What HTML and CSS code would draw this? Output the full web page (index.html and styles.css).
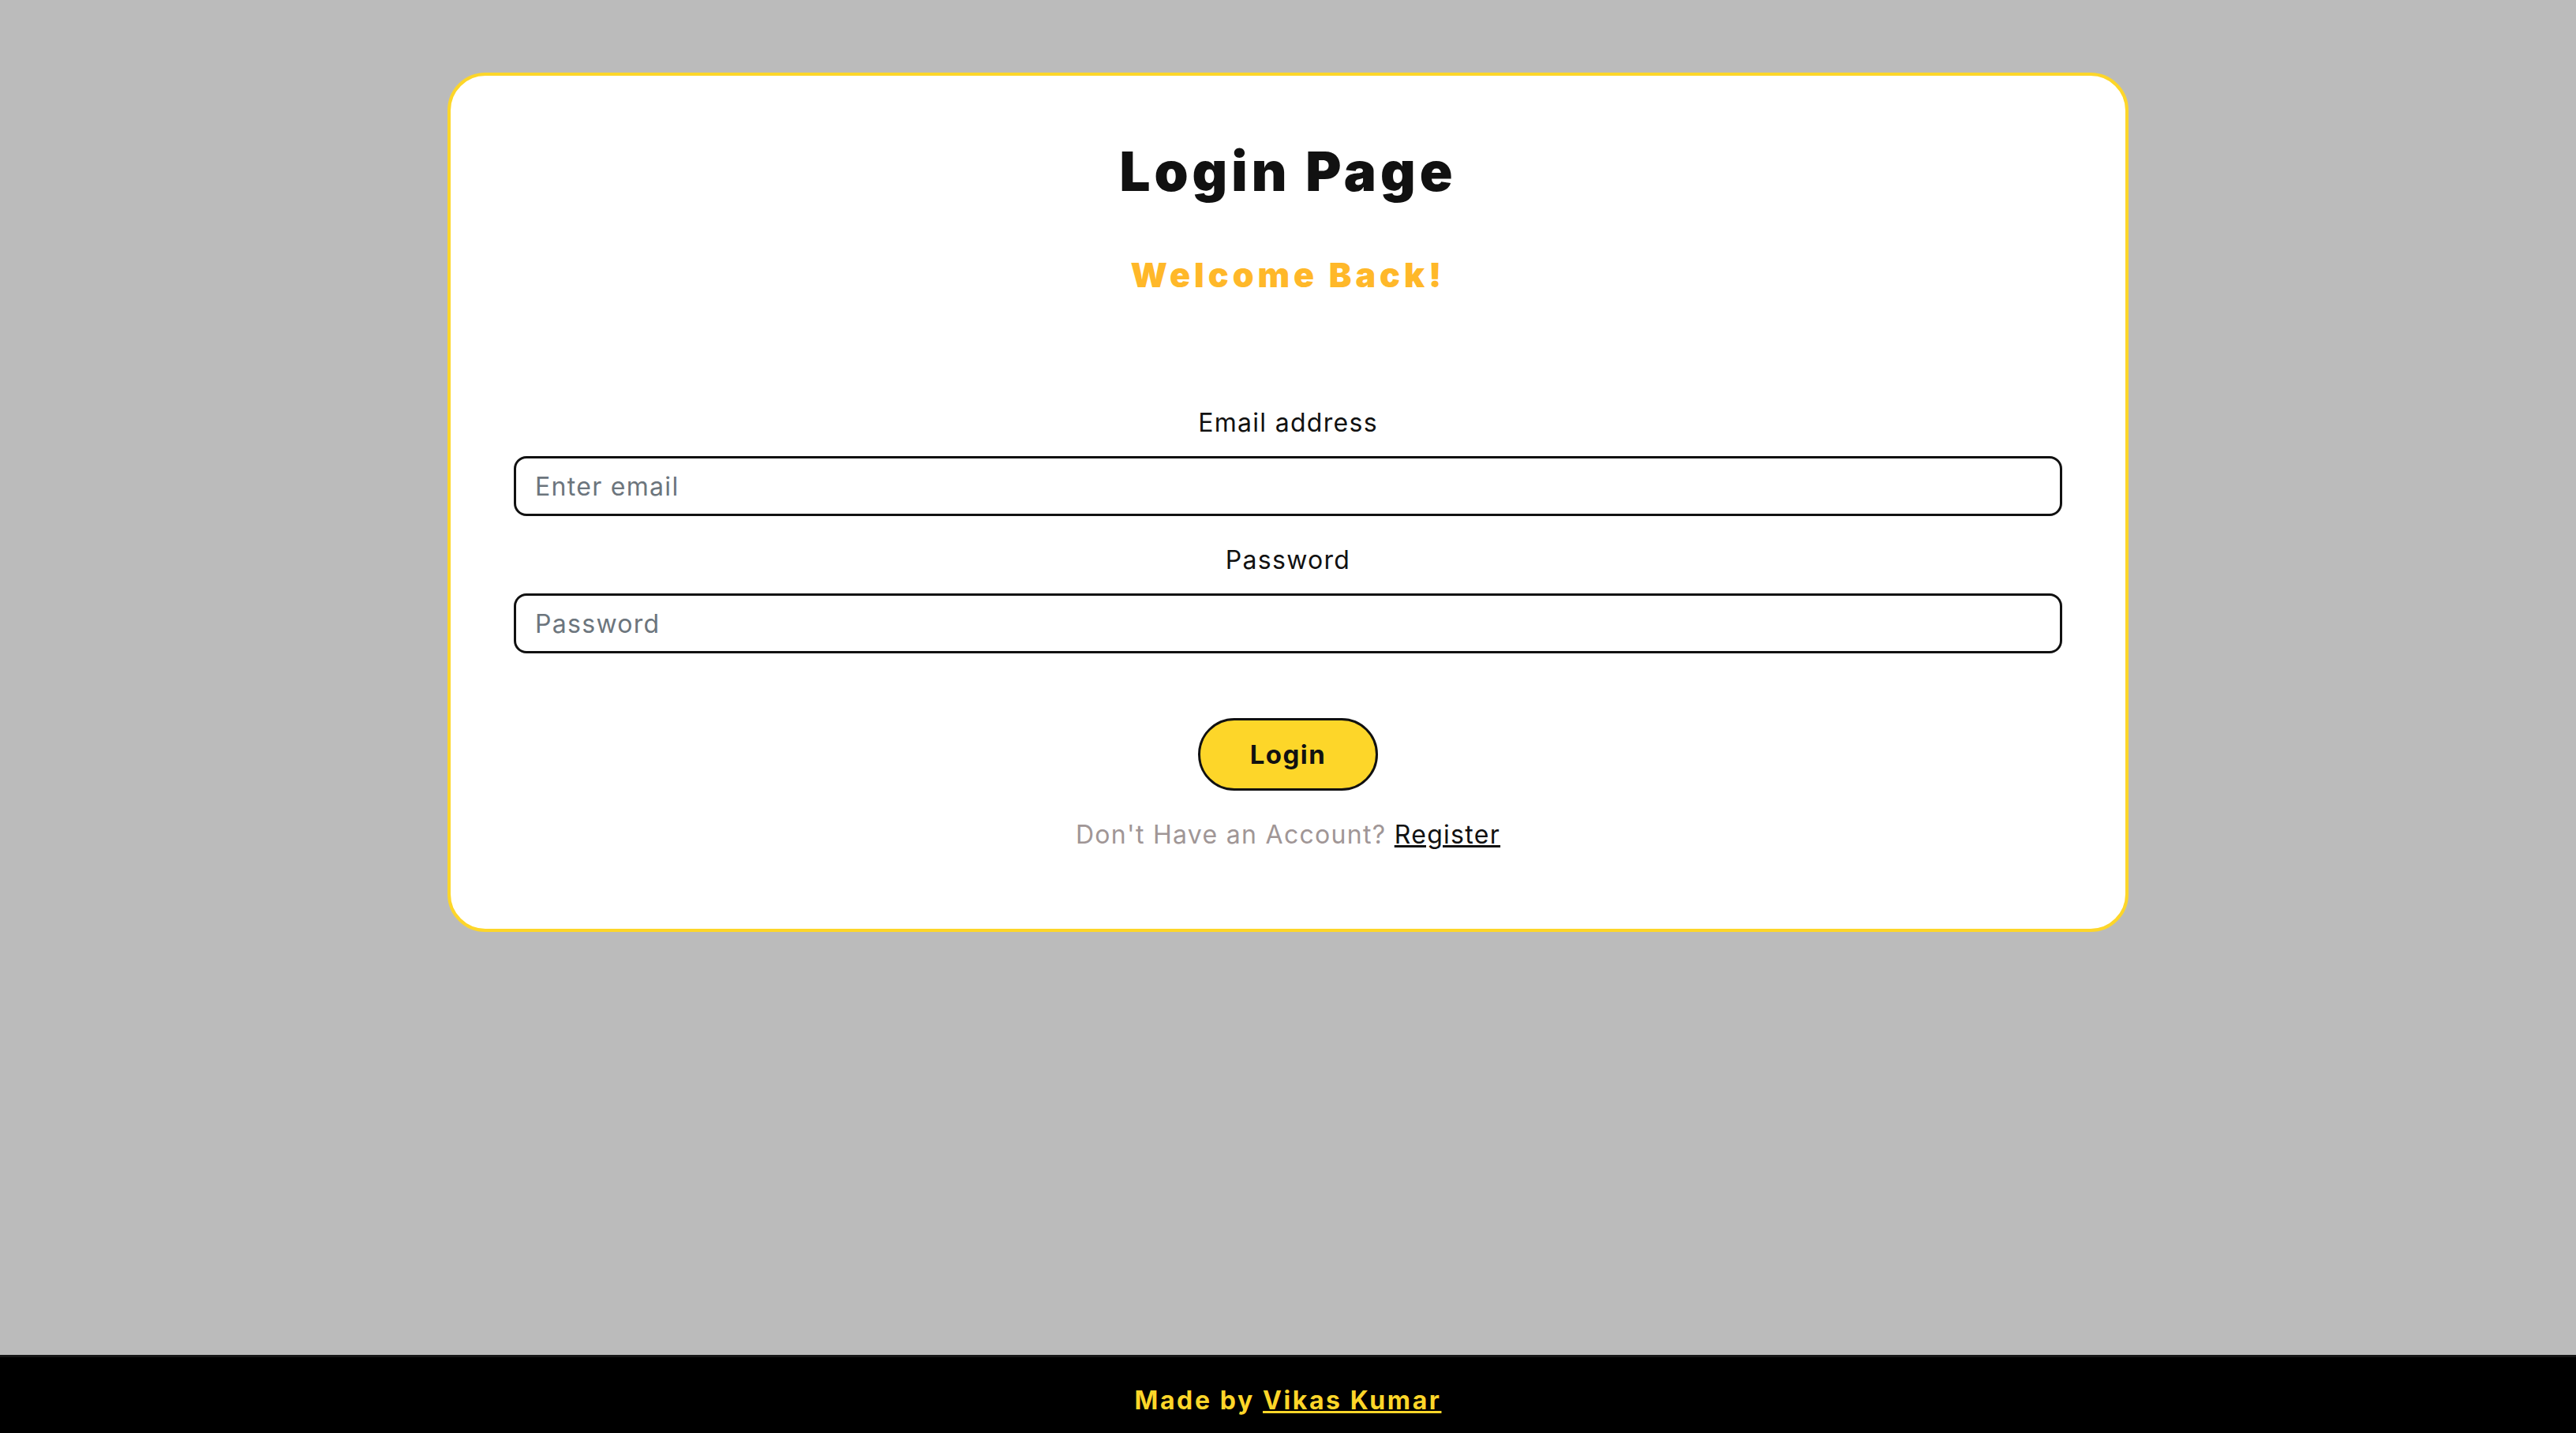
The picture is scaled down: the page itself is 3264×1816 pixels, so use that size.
FILE: index.html
```html
<!DOCTYPE html>
<html lang="en">
<head>
<meta charset="utf-8">
<title>Login Page</title>
<link rel="stylesheet" href="styles.css">
</head>
<body>
<main class="page">
  <section class="card">
    <h1 class="title">Login Page</h1>
    <h2 class="subtitle">Welcome Back!</h2>
    <form class="form">
      <label class="label" for="email">Email address</label>
      <input class="input" id="email" type="email" placeholder="Enter email">
      <label class="label label-pw" for="password">Password</label>
      <input class="input" id="password" type="password" placeholder="Password">
      <button class="btn" type="button">Login</button>
      <p class="switch">Don't Have an Account? <a href="#" class="switch-link">Register</a></p>
    </form>
  </section>
</main>
<footer class="footer">
  <p class="footer-text">Made by <a href="#" class="footer-link">Vikas Kumar</a></p>
</footer>
</body>
</html>
```

FILE: styles.css
```css
* { box-sizing: border-box; }
html, body { height: 100%; }
body {
  margin: 0;
  background: #bbbbbb;
  font-family: Inter, "Noto Sans", "DejaVu Sans", sans-serif;
  color: #111;
  display: flex;
  flex-direction: column;
  min-height: 100vh;
}
.page {
  flex: 1;
  display: flex;
  justify-content: center;
  align-items: flex-start;
  padding-top: 92px;
}
.card {
  width: 2130px;
  background: #fff;
  border: 4px solid #fdd629;
  border-radius: 48px;
  padding: 80px 80px 95px;
  text-align: center;
}
.title {
  margin: 0;
  font-size: 69px;
  line-height: 1.2;
  font-weight: 900;
  color: #111;
  letter-spacing: 5px;
}
.subtitle {
  margin: 64px 0 0;
  font-size: 43px;
  line-height: 1.2;
  font-weight: 900;
  color: #ffb829;
  letter-spacing: 5px;
}
.form {
  display: flex;
  flex-direction: column;
  align-items: center;
  margin-top: 138px;
}
.label {
  font-size: 32px;
  line-height: 48px;
  color: #111;
  letter-spacing: 1.3px;
}
.label-pw { margin-top: 32px; }
.input {
  width: 100%;
  height: 76px;
  margin-top: 18px;
  border: 3px solid #111;
  border-radius: 16px;
  padding: 0 24px;
  font-family: inherit;
  font-size: 32px;
  letter-spacing: 1.3px;
  color: #212529;
  background: #fff;
  outline: none;
}
.input::placeholder { color: #6c757d; }
.btn {
  margin-top: 82px;
  width: 228px;
  height: 92px;
  border: 3px solid #111;
  border-radius: 46px;
  background: #fdd629;
  font-family: inherit;
  font-size: 33px;
  font-weight: 700;
  letter-spacing: 1.5px;
  color: #111;
  cursor: pointer;
}
.switch {
  margin: 32px 0 0;
  font-size: 32px;
  line-height: 48px;
  color: #a09696;
  letter-spacing: 1.3px;
}
.switch-link {
  color: #111;
  text-decoration: underline;
}
.footer {
  height: 99px;
  background: #000;
  border-top: 3px solid #151515;
  padding-top: 31px;
  text-align: center;
}
.footer-text {
  margin: 0;
  font-size: 32px;
  line-height: 48px;
  font-weight: 700;
  color: #fdd629;
  letter-spacing: 2.6px;
}
.footer-link {
  color: #fdd629;
  text-decoration: underline;
}
```
